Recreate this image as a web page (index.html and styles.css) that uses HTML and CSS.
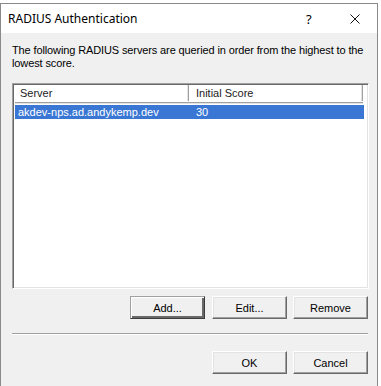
FILE: index.html
```html
<!DOCTYPE html>
<html lang="en">
<head>
    <meta charset="UTF-8">
    <meta name="viewport" content="width=device-width, initial-scale=1.0">
    <title>RADIUS Authentication</title>
    <link rel="stylesheet" href="styles.css">
</head>
<body>
    <div class="window">
        <header class="titlebar">
            <span class="title">RADIUS Authentication</span>
            <span class="help">?</span>
            <span class="close">
                <svg width="10" height="10" viewBox="0 0 10 10">
                    <path d="M0.5 0.5 L9.5 9.5 M9.5 0.5 L0.5 9.5" stroke="#111" stroke-width="1" fill="none"/>
                </svg>
            </span>
        </header>
        <main class="content">
            <p class="intro">The following RADIUS servers are queried in order from the highest to the lowest score.</p>

            <div class="listview">
                <div class="list-header">
                    <div class="col col-server">Server</div>
                    <div class="col col-score">Initial Score</div>
                </div>
                <div class="list-row selected">
                    <div class="cell col-server">akdev-nps.ad.andykemp.dev</div>
                    <div class="cell col-score">30</div>
                </div>
            </div>

            <div class="button-row">
                <button class="btn default">Add...</button>
                <button class="btn">Edit...</button>
                <button class="btn">Remove</button>
            </div>

            <hr class="separator">

            <div class="button-row footer">
                <button class="btn">OK</button>
                <button class="btn">Cancel</button>
            </div>
        </main>
    </div>
</body>
</html>
```
FILE: styles.css
```css
body {
    margin: 0;
    padding: 0;
    background-color: #fff;
    font-family: 'Liberation Sans', Arial, sans-serif;
    font-size: 11px;
    color: #000;
}
.window {
    width: 376px;
    margin-top: 3px;
    border: 1px solid #8a8a8a;
    border-bottom: none;
    height: 383px;
    display: flex;
    flex-direction: column;
    background-color: #f0f0f0;
}
.titlebar {
    height: 29px;
    background-color: #fff;
    display: flex;
    align-items: center;
    padding-left: 7px;
    font-family: 'Noto Sans', sans-serif;
    font-size: 12px;
    color: #000;
}
.title {
    flex: 1;
    padding-bottom: 1px;
}
.help {
    width: 12px;
    margin-right: 32px;
    font-size: 13px;
}
.close {
    width: 10px;
    height: 10px;
    margin-right: 17px;
    display: flex;
}
.content {
    flex: 1;
    padding: 11px 9px 0 11px;
}
.intro {
    margin: 0;
    line-height: 13px;
    width: 362px;
    letter-spacing: -0.12px;
}
.listview {
    margin-top: 13px;
    width: 351px;
    height: 203px;
    background-color: #fff;
    border: 1px solid;
    border-color: #a0a0a0 #fff #fff #a0a0a0;
    box-shadow: inset 1px 1px 0 #696969, inset -1px -1px 0 #e3e3e3;
    padding: 1px 2px 0 2px;
}
.list-header {
    display: flex;
    height: 17px;
    width: 348px;
    border-bottom: 1px solid #a0a0a0;
    box-shadow: 0 1px 0 #e3e3e3;
}
.col {
    height: 16px;
    line-height: 16px;
    padding-left: 5px;
    border-right: 1px solid #a0a0a0;
    box-shadow: inset -1px 0 0 #e3e3e3;
    box-sizing: border-box;
    color: #222;
}
.col-server {
    width: 174px;
}
.col-score {
    flex: 1;
    padding-left: 7px;
}
.list-row {
    display: flex;
    margin-top: 2px;
    height: 14px;
    line-height: 14px;
    width: 349px;
}
.list-row .cell {
    padding-left: 3px;
    box-sizing: border-box;
}
.list-row .col-score {
    padding-left: 7px;
}
.selected {
    background-color: #3a77d4;
    color: #fff;
}
.button-row {
    display: flex;
    justify-content: flex-end;
    gap: 6px;
    margin-top: 7px;
}
.btn {
    width: 75px;
    height: 23px;
    padding: 0;
    font-family: 'Liberation Sans', Arial, sans-serif;
    font-size: 11px;
    color: #000;
    background-color: #f0f0f0;
    border: 1px solid;
    border-color: #fff #696969 #696969 #fff;
    box-shadow: inset -1px -1px 0 #a0a0a0, inset 1px 1px 0 #e3e3e3;
    border-radius: 0;
}
.btn.default {
    border: 1px solid #3c3c3c;
    border-color: #a0a0a0 #3c3c3c #3c3c3c #a0a0a0;
    box-shadow: inset 1px 1px 0 #fff, inset -2px -2px 0 #696969;
    margin-right: 1px;
}
.separator {
    margin: 14px 0 0 0;
    width: 356px;
    border: none;
    border-top: 1px solid #a0a0a0;
    border-bottom: 1px solid #fff;
}
.footer {
    margin-top: 16px;
}
```
